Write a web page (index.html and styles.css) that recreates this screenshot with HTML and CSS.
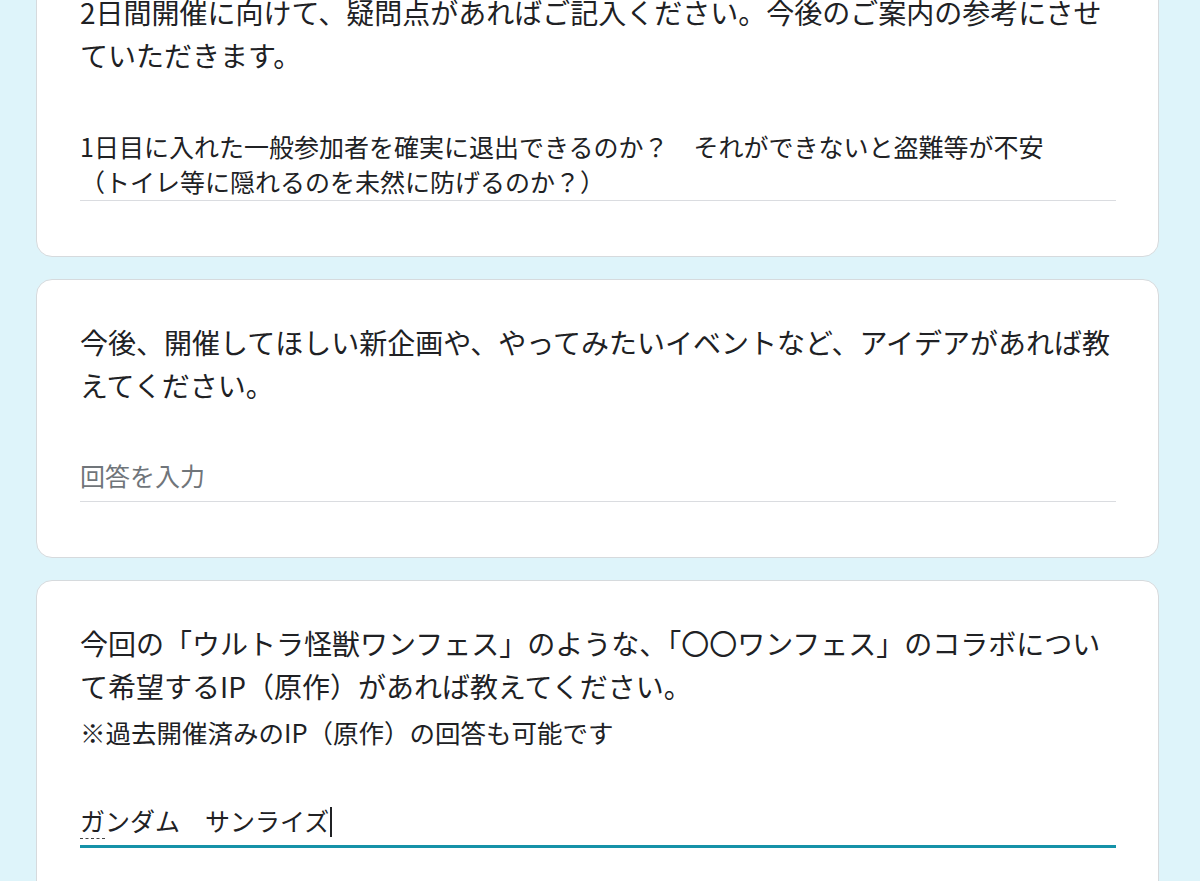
FILE: index.html
```html
<!DOCTYPE html>
<html lang="ja">
<head>
<meta charset="utf-8">
<link rel="stylesheet" href="styles.css">
</head>
<body>
<main class="form">
  <section class="card">
    <h2 class="q-title">2日間開催に向けて、疑問点があればご記入ください。今後のご案内の参考にさせていただきます。</h2>
    <div class="answer textarea">1日目に入れた一般参加者を確実に退出できるのか？　それができないと盗難等が不安<br>（トイレ等に隠れるのを未然に防げるのか？）</div>
  </section>
  <section class="card">
    <h2 class="q-title">今後、開催してほしい新企画や、やってみたいイベントなど、アイデアがあれば教えてください。</h2>
    <div class="answer input placeholder">回答を入力</div>
  </section>
  <section class="card">
    <h2 class="q-title">今回の「ウルトラ怪獣ワンフェス」のような、「〇〇ワンフェス」のコラボについて希望するIP（原作）があれば教えてください。</h2>
    <p class="q-note">※過去開催済みのIP（原作）の回答も可能です</p>
    <div class="answer input focused"><span class="ime">ガ</span>ンダム　サンライズ<span class="caret"></span></div>
  </section>
</main>
</body>
</html>
```
FILE: styles.css
```css
html, body {
  margin: 0;
  padding: 0;
  background: #def4fa;
}
body {
  font-family: "Noto Sans CJK JP", "Noto Sans", sans-serif;
  color: #202124;
  overflow: hidden;
  height: 881px;
}
.form {
  display: flex;
  flex-direction: column;
  gap: 22px;
  width: 1123px;
  margin: -51px 0 0 36px;
}
.card {
  background: #ffffff;
  border: 1px solid #d6dadd;
  border-radius: 16px;
  padding: 41px 42px 55px 43px;
}
.q-title {
  margin: 0;
  font-size: 28px;
  font-weight: 400;
  line-height: 43px;
  letter-spacing: 0;
}
.q-note {
  margin: 6px 0 0;
  font-size: 25.5px;
  line-height: 35px;
}
.answer {
  margin-top: 52px;
  font-size: 25px;
  line-height: 35px;
  border-bottom: 1px solid #dadce0;
}
.textarea {
  padding-bottom: 1px;
}
.input {
  padding-bottom: 6px;
}
.placeholder {
  margin-top: 51px;
  padding-bottom: 8px;
  color: #70757a;
}
.focused {
  margin-top: 54px;
  padding-bottom: 7px;
  border-bottom: 3px solid #1592a8;
}
.ime {
  border-bottom: 1px dashed #444;
}
.caret {
  display: inline-block;
  width: 2px;
  height: 30px;
  background: #202124;
  vertical-align: -6px;
  margin-left: 1px;
}
```
